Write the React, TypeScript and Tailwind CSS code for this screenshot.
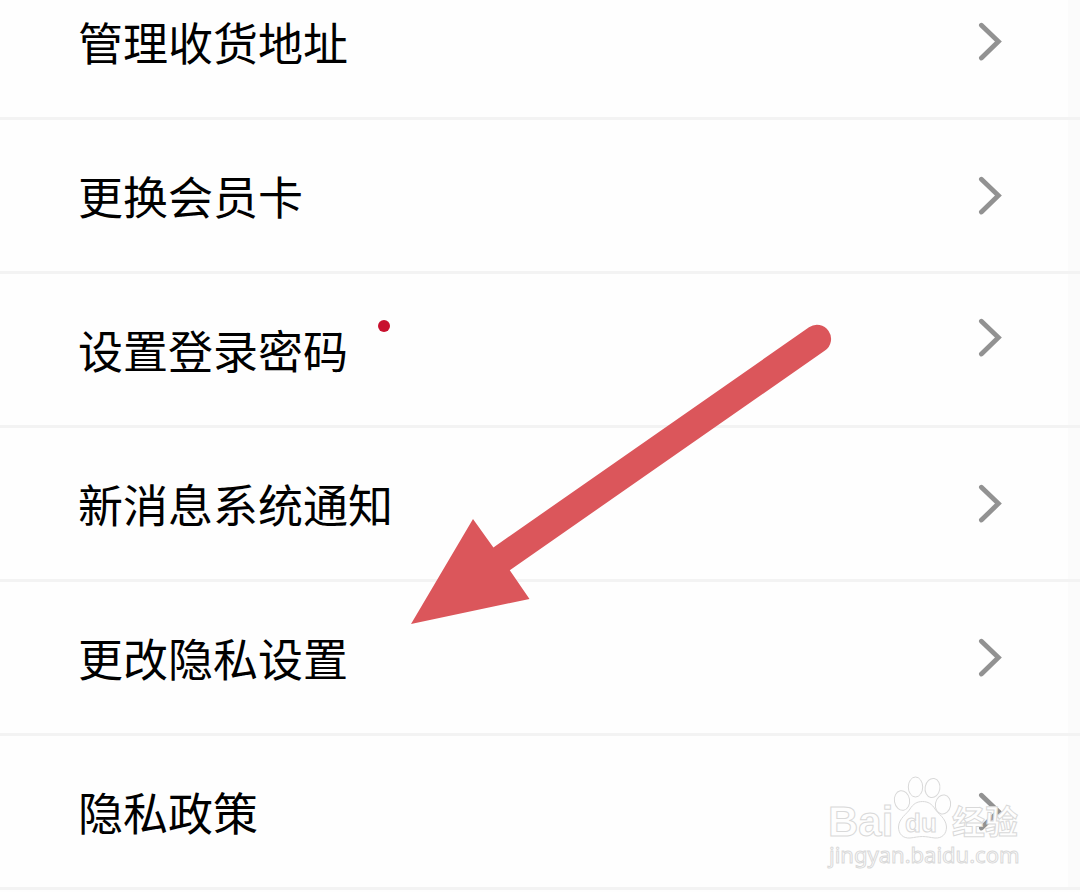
type Item = {
  label: string;
  dot?: boolean;
};

const items: Item[] = [
  { label: "管理收货地址" },
  { label: "更换会员卡" },
  { label: "设置登录密码", dot: true },
  { label: "新消息系统通知" },
  { label: "更改隐私设置" },
  { label: "隐私政策" },
];

function Chevron() {
  return (
    <svg width="24" height="40" viewBox="0 0 24 40" fill="none" aria-hidden="true">
      <path
        d="M3.4 3.2L20.4 19.6L3.4 36"
        stroke="#929292"
        strokeWidth="4.8"
        strokeLinecap="round"
      />
    </svg>
  );
}

function SettingsRow({ label, dot }: Item) {
  return (
    <li className="border-b-[3px] border-[#f3f3f3]">
      <a
        href="#"
        className="flex h-[151px] items-center justify-between border-r-[12px] border-[#fbfbfb] pr-[66px] pl-[78px]"
      >
        <span className="flex items-start gap-[30px]">
          <span className="text-[45px] leading-[60px]">{label}</span>
          {dot && <span className="size-3 rounded-full bg-[#c8102e]" />}
        </span>
        {/* the row with a badge keeps its chevron a bit higher */}
        <span className={dot ? "pb-6" : ""}>
          <Chevron />
        </span>
      </a>
    </li>
  );
}

function Arrow() {
  return (
    <svg
      className="pointer-events-none absolute top-[320px] left-[408px]"
      width="428"
      height="308"
      viewBox="408 320 428 308"
      fill="#db565b"
      aria-hidden="true"
    >
      <path d="M411 624L473 519L493.4 547.4L809 327.3A14 14 0 0 1 825 350.5L509.8 570.2L529.5 599Z" />
    </svg>
  );
}

function Watermark() {
  return (
    <svg
      className="pointer-events-none absolute right-[54px] bottom-[20px]"
      width="206"
      height="102"
      viewBox="820 770 206 102"
      fill="#fefefe"
      stroke="#d9d9d9"
      strokeWidth="1"
    >
      <g className="font-['Liberation_Sans','Noto_Sans_CJK_SC',sans-serif] font-bold">
        <text x="828" y="836" fontSize="42">Bai</text>
        <ellipse cx="902" cy="800.5" rx="7.6" ry="9.8" transform="rotate(-10 902 800.5)" />
        <ellipse cx="915.5" cy="787" rx="7.2" ry="10" />
        <ellipse cx="932.5" cy="788" rx="7.4" ry="9.6" transform="rotate(10 932.5 788)" />
        <ellipse cx="943" cy="804.5" rx="7.6" ry="9.6" transform="rotate(10 943 804.5)" />
        <path d="M922.5 801.5C928 801.5 932 804 935 809C938 814 946 818 946.5 827C946.5 834 942 838.5 935 838C930 837.5 927 836.5 922.5 836.5C918 836.5 915 837.5 910 838C903 838.5 898.5 834 898.5 827C899 818 907 814 910 809C913 804 917 801.5 922.5 801.5Z" />
        <text x="905" y="832" fontSize="26">du</text>
        <text x="952" y="834" fontSize="33">经验</text>
      </g>
      <text
        x="829"
        y="863"
        fontSize="22"
        className="font-['Noto_Sans',sans-serif]"
      >
        jingyan.baidu.com
      </text>
    </svg>
  );
}

export default function App() {
  return (
    <main
      lang="zh-CN"
      className="relative min-h-screen overflow-hidden bg-[#fefefe] font-['Noto_Sans_CJK_SC',sans-serif] text-black"
    >
      {/* list is scrolled, the first row is partly cut off */}
      <ul className="-mt-[34px]">
        {items.map((item) => (
          <SettingsRow key={item.label} {...item} />
        ))}
      </ul>
      <Arrow />
      <Watermark />
    </main>
  );
}
